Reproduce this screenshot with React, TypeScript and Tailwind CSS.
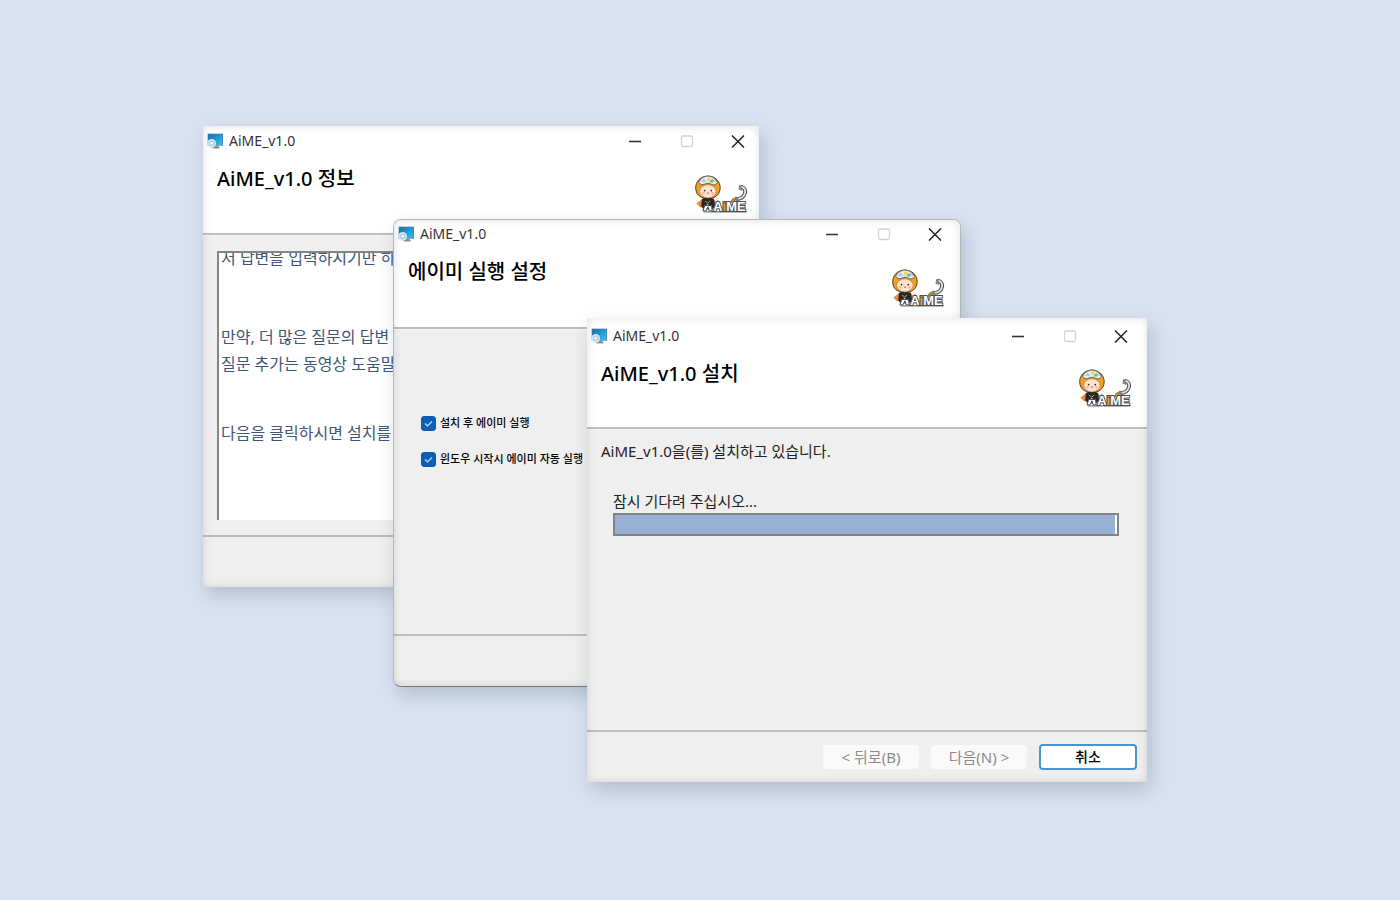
import React from 'react';

const MonitorIcon = () => (
  <svg viewBox="0 0 48 48" className="size-4 shrink-0" aria-hidden="true">
    <defs>
      <linearGradient id="screen" x1="0" y1="0" x2="1" y2="1">
        <stop offset="0" stopColor="#1a6fa8" />
        <stop offset="0.5" stopColor="#1c9ad8" />
        <stop offset="1" stopColor="#35c0ee" />
      </linearGradient>
    </defs>
    <rect x="2" y="2" width="46" height="36" fill="#4d7f9c" />
    <rect x="4" y="4" width="42" height="32" fill="url(#screen)" />
    <path d="M22 38h12l2 6H20z" fill="#8a9299" />
    <rect x="16" y="43" width="22" height="3" fill="#6c747a" />
    <circle cx="14" cy="31" r="13" fill="#d5e6f1" />
    <circle cx="14" cy="31" r="8" fill="#a9cde4" />
    <circle cx="14" cy="31" r="4" fill="#fff" />
  </svg>
);

const Mascot = () => (
  <svg viewBox="0 0 160 114" className="h-[38px] w-[53px]" role="img" aria-label="AiME">
    {/* cape and body */}
    <path d="M22 72 4 86l12 12 20-8z" fill="#ef8a3c" />
    <path d="M56 72l10 10-8 12-14-6z" fill="#ef8a3c" />
    <path d="M22 72q16-8 34 0l4 22-8 8H26l-6-8z" fill="#26282c" stroke="#15161a" strokeWidth="2" />
    <path d="M31 78l7 7 8-7" fill="none" stroke="#d9a531" strokeWidth="3" />
    <circle cx="38" cy="90" r="3" fill="#d5d8dc" />
    {/* helmet */}
    <path d="M39 3C17 3 2 19 2 38c0 14 7 24 18 29h38c11-5 18-15 18-29C76 19 61 3 39 3z" fill="#eda023" stroke="#5b3a12" strokeWidth="3" />
    <path d="M11 22C17 9 28 3 39 3s23 6 29 19c-4 8-14 9-20 5-6-3-12-3-18 0-6 4-15 2-19-5z" fill="#e6ecef" stroke="#596066" strokeWidth="3" />
    <path d="M18 20l8-10 8 11zM58 10l6 11-11-2z" fill="#a7c6dd" />
    <path d="M36 10l9-4 2 8-9 5z" fill="#f4d451" />
    <path d="M45 16l9-4 1 10-9 1z" fill="#74bb72" />
    <ellipse cx="39" cy="49" rx="25" ry="20" fill="#fde3ce" stroke="#b97829" strokeWidth="2" />
    <circle cx="29" cy="47" r="2.5" fill="#342620" />
    <circle cx="49" cy="47" r="2.5" fill="#342620" />
    <circle cx="25" cy="55" r="4" fill="#f9b9a2" />
    <circle cx="53" cy="55" r="4" fill="#f9b9a2" />
    <path d="M35 53q4 7 8 0z" fill="#a23e32" />
    {/* legs */}
    <path d="M29 92l-5 16h9l6-12 4 12h9l-2-16z" fill="#fff" stroke="#44474c" strokeWidth="3" />
    {/* handset and cord */}
    <path d="M112 84c0-12 8-8 14-16" fill="none" stroke="#6b5525" strokeWidth="8" />
    <path d="M112 84c0-12 8-8 14-16" fill="none" stroke="#eda923" strokeWidth="4" />
    <path d="M142 36c17 6 10 34-14 36" fill="none" stroke="#4d4f53" strokeWidth="12" strokeLinecap="round" />
    <path d="M142 36c17 6 10 34-14 36" fill="none" stroke="#dedfe0" strokeWidth="6" strokeLinecap="round" />
    <path d="M122 66l10 12M136 30l-2 12 9 4" fill="none" stroke="#8a8274" strokeWidth="5" />
    <path d="M26 111h130" stroke="#77797d" strokeWidth="4" />
    <text
      x="55"
      y="109"
      fontSize="39"
      fontWeight="900"
      fontFamily="'Liberation Sans', sans-serif"
      fill="#fff"
      stroke="#4a4c50"
      strokeWidth="6"
      paintOrder="stroke"
    >
      A<tspan fill="#f0a31c">i</tspan>ME
    </text>
  </svg>
);

const WindowControls = () => (
  <div className="flex">
    <button aria-label="최소화" className="grid h-7 w-[52px] place-items-center">
      <svg viewBox="0 0 14 14" className="size-3.5" stroke="#333" strokeWidth="1.6">
        <path d="M1 7.5h12" />
      </svg>
    </button>
    <button aria-label="최대화" disabled className="grid h-7 w-[51px] place-items-center">
      <svg viewBox="0 0 14 14" className="size-3.5" fill="none" stroke="#d4d4d4" strokeWidth="1.3">
        <rect x="1.5" y="2" width="11" height="10.5" rx="1.5" />
      </svg>
    </button>
    <button aria-label="닫기" className="grid h-7 w-[52px] place-items-center">
      <svg viewBox="0 0 14 14" className="size-3.5" stroke="#222" strokeWidth="1.5">
        <path d="M1 1.5l12 12M13 1.5l-12 12" />
      </svg>
    </button>
  </div>
);

interface InstallerWindowProps {
  heading: string;
  className: string;
  headerClass: string;
  controlsClass: string;
  footer?: React.ReactNode;
  children: React.ReactNode;
}

const InstallerWindow: React.FC<InstallerWindowProps> = ({
  heading,
  className,
  headerClass,
  controlsClass,
  footer,
  children,
}) => (
  <section aria-label={heading} className={`absolute flex flex-col overflow-hidden bg-[#efefef] ${className}`}>
    <header
      className={`flex flex-col border-b-2 border-[#bdbdbd] bg-white shadow-[0_1px_0_#f8f8f8] ${headerClass}`}
    >
      <div className={`flex h-7 items-center justify-between ${controlsClass}`}>
        <div className="flex items-center gap-1.5 pl-1">
          <MonitorIcon />
          <span className="text-sm text-[#333]">AiME_v1.0</span>
        </div>
        <WindowControls />
      </div>
      <div className="flex flex-1 justify-between pr-[11px] pl-3.5">
        <h2 className="pt-2.5 text-xl leading-7 font-medium text-black">{heading}</h2>
        <div className="self-end pb-5">
          <Mascot />
        </div>
      </div>
    </header>
    <div className="flex-1">{children}</div>
    <footer className="flex h-[52px] items-center justify-end gap-3 border-t-2 border-[#bdbdbd] pr-2.5">
      {footer}
    </footer>
    <div className="pointer-events-none absolute inset-0 rounded-[inherit] shadow-[inset_0_0_8px_rgba(0,0,0,0.13)]" />
  </section>
);

interface OptionProps {
  id: string;
  label: string;
}

const Option: React.FC<OptionProps> = ({ id, label }) => (
  <div className="flex h-4 items-center gap-1">
    <span className="grid size-[15px] shrink-0">
      <input
        id={id}
        type="checkbox"
        defaultChecked
        className="peer col-start-1 row-start-1 size-[15px] appearance-none rounded-[3px] border border-[#0b5cab] bg-white checked:bg-[#0b5fb5]"
      />
      <svg
        viewBox="0 0 15 15"
        className="pointer-events-none invisible col-start-1 row-start-1 peer-checked:visible"
        fill="none"
        stroke="#c5def5"
        strokeWidth="1.2"
      >
        <path d="M4 7.5l2.5 2.5L11 5.5" />
      </svg>
    </span>
    <label htmlFor={id} className="text-[11px] font-medium whitespace-nowrap text-black">
      {label}
    </label>
  </div>
);

export default function App() {
  return (
    <main className="relative min-h-screen overflow-hidden bg-[#d9e2f1] font-['Noto_Sans','Noto_Sans_CJK_KR',sans-serif]">
      <InstallerWindow
        heading="AiME_v1.0 정보"
        className="top-[126px] left-[203px] h-[461px] w-[556px] shadow-[4px_8px_18px_rgba(90,110,140,0.3)]"
        headerClass="h-[109px] pt-px"
        controlsClass="-mr-[5px]"
      >
        <div className="px-3.5 pt-4">
          <div className="h-[269px] overflow-hidden border-t-2 border-l-2 border-[#858585] bg-white pl-0.5 text-base leading-[27px] whitespace-nowrap text-[#3f557c]">
            <p className="-mt-2">서 답변을 입력하시기만 하</p>
            <p className="mt-[52px]">만약, 더 많은 질문의 답변</p>
            <p>질문 추가는 동영상 도움말</p>
            <p className="mt-[42px]">다음을 클릭하시면 설치를</p>
          </div>
        </div>
      </InstallerWindow>

      <InstallerWindow
        heading="에이미 실행 설정"
        className="top-[219px] left-[393px] h-[468px] w-[568px] rounded-lg border border-[#b5b7ba] border-b-[#777] shadow-[4px_8px_18px_rgba(90,110,140,0.3)]"
        headerClass="h-[109px] pr-1"
        controlsClass="-mr-[5px]"
      >
        <div className="flex flex-col gap-5 pt-[86px] pl-[27px]">
          <Option id="run-after" label="설치 후 에이미 실행" />
          <Option id="run-startup" label="윈도우 시작시 에이미 자동 실행" />
        </div>
      </InstallerWindow>

      <InstallerWindow
        heading="AiME_v1.0 설치"
        className="top-[318px] left-[587px] h-[464px] w-[560px] shadow-[4px_8px_18px_rgba(90,110,140,0.3)]"
        headerClass="h-[111px] pt-1 pr-1"
        controlsClass="-mr-1"
        footer={
          <>
            <button disabled className="h-6 w-24 rounded-sm bg-[#fafafa] text-[15px] text-[#8b8b8b]">
              &lt; 뒤로(B)
            </button>
            <button disabled className="h-6 w-24 rounded-sm bg-[#fafafa] text-[15px] text-[#8b8b8b]">
              다음(N) &gt;
            </button>
            <button className="h-[26px] w-[98px] rounded-sm border-2 border-[#4a94cf] bg-white text-sm leading-5 font-medium text-black">
              취소
            </button>
          </>
        }
      >
        <div className="pt-3 pr-7 pl-3.5 text-[15px] leading-5 text-[#222]">
          <p>AiME_v1.0을(를) 설치하고 있습니다.</p>
          <div className="pt-[30px] pl-3">
            <p id="progress-label">잠시 기다려 주십시오...</p>
            <div
              role="progressbar"
              aria-labelledby="progress-label"
              aria-valuenow={99}
              className="mt-0.5 h-[23px] border-2 border-[#808389] bg-white"
            >
              <div className="h-full w-[99.6%] bg-[#97b1d2]" />
            </div>
          </div>
        </div>
      </InstallerWindow>
    </main>
  );
}
